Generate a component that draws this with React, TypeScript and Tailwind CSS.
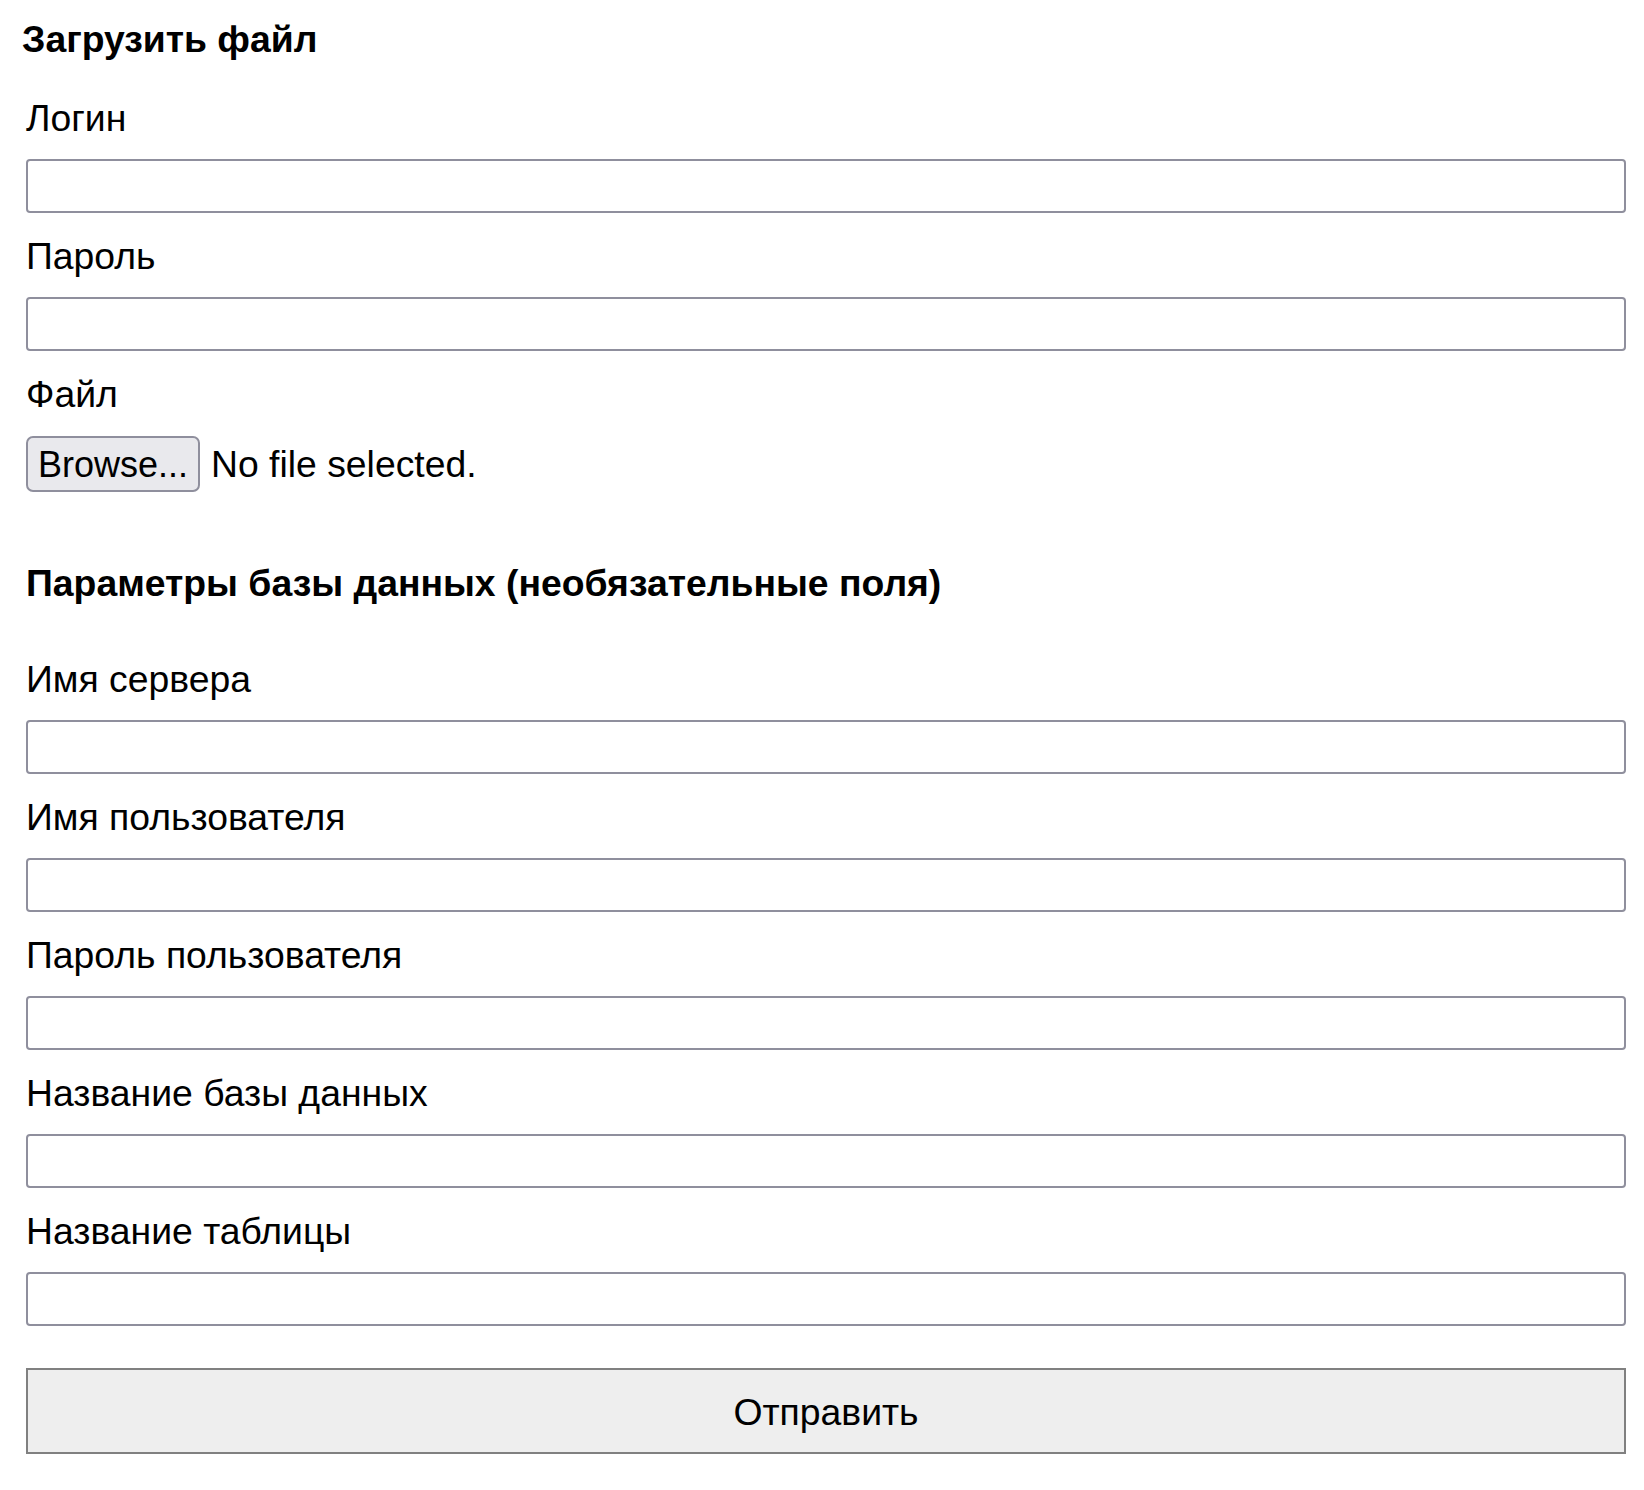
import React from "react";

interface FieldProps {
  label: string;
  first?: boolean;
  type?: string;
}

const Field = ({ label, first, type = "text" }: FieldProps) => {
  return (
    <div className={first ? "mt-[36px]" : "mt-[22px]"}>
      <label className="block text-[37.33px] leading-[42px] text-black">
        {label}
      </label>
      <input
        type={type}
        className="mt-[20px] block h-[54px] w-[1600px] rounded-[4px] border-2 border-[#8f8f9d] bg-white px-3 text-[37.33px] outline-none"
      />
    </div>
  );
};

const dbFields = [
  "Имя сервера",
  "Имя пользователя",
  "Пароль пользователя",
  "Название базы данных",
  "Название таблицы",
];

export default function App() {
  return (
    <div className="min-h-[1490px] bg-white pt-[17px] font-['Liberation_Sans',Arial,sans-serif] text-black">
      <h3 className="pl-[22px] text-[37.33px] font-bold leading-[44px]">
        Загрузить файл
      </h3>

      <form className="pl-[26px]" onSubmit={(e) => e.preventDefault()}>
        <Field label="Логин" first />
        <Field label="Пароль" type="password" />

        <div className="mt-[22px]">
          <label className="block text-[37.33px] leading-[42px]">Файл</label>
          <div className="mt-[21px] flex items-center gap-[11px]">
            <button
              type="button"
              className="h-[56px] w-[174px] rounded-[7px] border-2 border-[#8f8f9d] bg-[#e9e9ed] pt-[2px] text-[36px] leading-none text-black"
            >
              Browse...
            </button>
            <span className="text-[37.33px] leading-[42px]">No file selected.</span>
          </div>
        </div>

        <h3 className="mt-[70px] text-[37.33px] font-bold leading-[42px]">
          Параметры базы данных (необязательные поля)
        </h3>

        <div className="mt-[54px]">
          {dbFields.map((label) => (
            <Field key={label} label={label} first={false} />
          ))}
        </div>

        <button
          type="submit"
          className="mt-[42px] block h-[86px] w-[1600px] border-2 border-[#808080] bg-[#eeeeee] pt-[3px] text-[37.33px] leading-none text-black"
        >
          Отправить
        </button>
      </form>
    </div>
  );
}
